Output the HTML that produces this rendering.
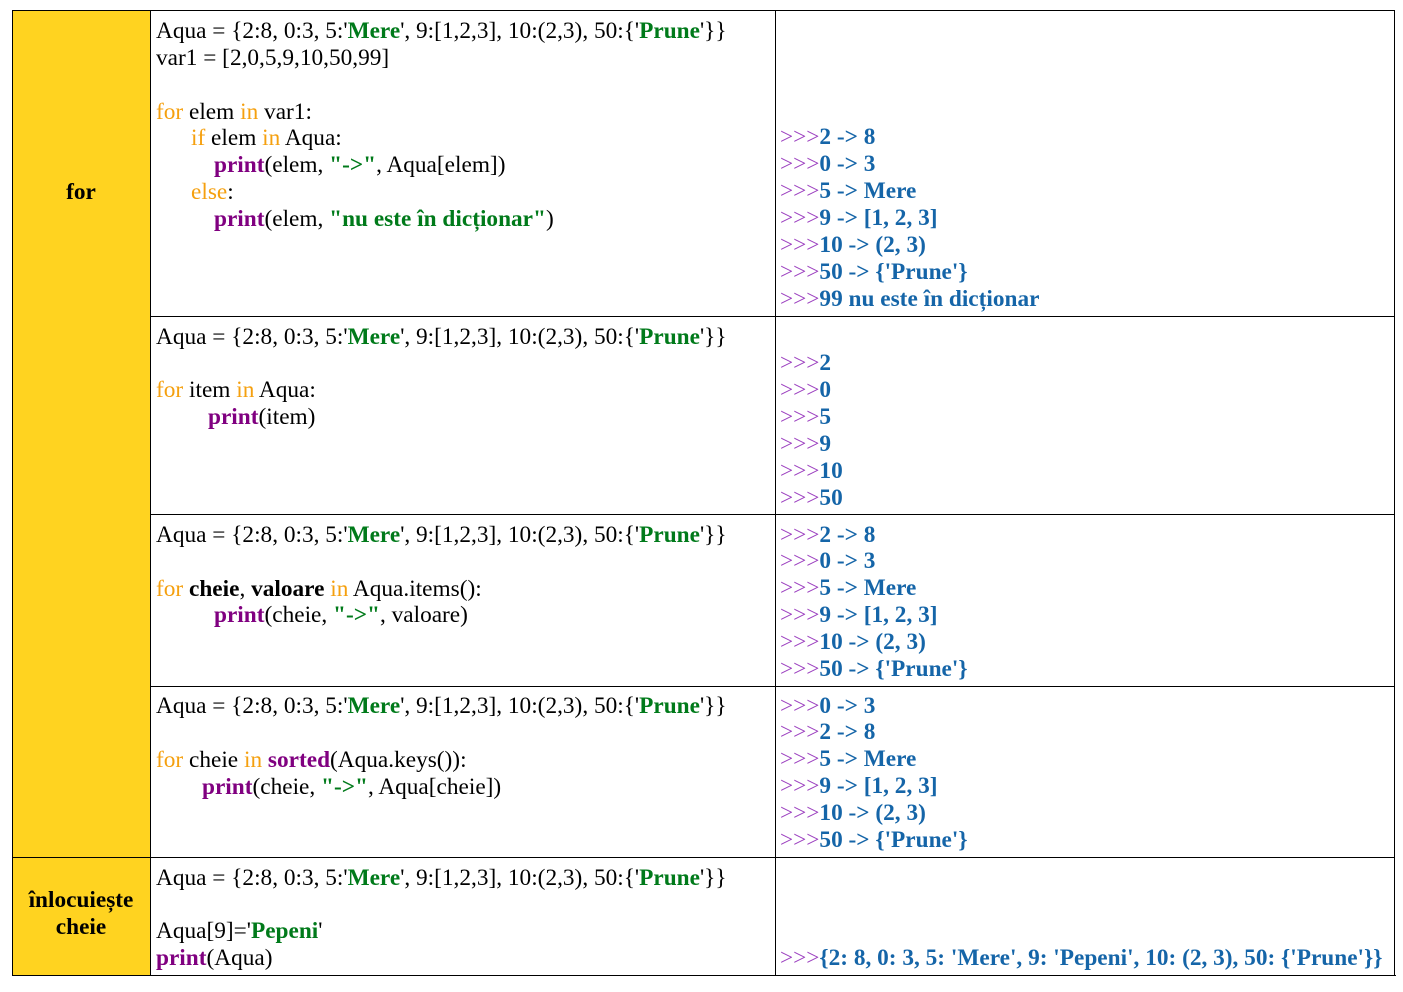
<!DOCTYPE html>
<html><head><meta charset="utf-8"><style>
body{margin:0;background:#fff;width:1403px;height:992px;position:relative;overflow:hidden;font-family:"Liberation Serif",serif;font-size:23.3px;color:#000}
.b{position:absolute;background:#000}
.y{position:absolute;background:#ffd320}
.l{position:absolute;white-space:pre;line-height:28px;margin-top:1px}
.k{color:#f5a00f}
.p{color:#800080;font-weight:bold}
.s{color:#007a1a;font-weight:bold}
.q{color:#9b3fbf}
.o{color:#1565a8;font-weight:bold}
.h{font-weight:bold;text-align:center;width:138px;left:12px}
</style></head><body>
<div class="y" style="left:12px;top:10px;width:138px;height:965px"></div>
<div class="b" style="left:12px;top:10px;width:1383px;height:1px"></div>
<div class="b" style="left:12px;top:975px;width:1384px;height:1px"></div>
<div class="b" style="left:12px;top:10px;width:1px;height:966px"></div>
<div class="b" style="left:150px;top:10px;width:1px;height:966px"></div>
<div class="b" style="left:775px;top:10px;width:1px;height:966px"></div>
<div class="b" style="left:1394px;top:10px;width:1px;height:966px"></div>
<div class="b" style="left:150px;top:316px;width:1245px;height:1px"></div>
<div class="b" style="left:150px;top:514px;width:1245px;height:1px"></div>
<div class="b" style="left:150px;top:686px;width:1245px;height:1px"></div>
<div class="b" style="left:12px;top:857px;width:1383px;height:1px"></div>

<div class="l h" style="top:177px">for</div>
<div class="l h" style="top:885px">înlocuiește</div>
<div class="l h" style="top:912px">cheie</div>

<div class="l" style="left:156px;top:16px">Aqua = {2:8, 0:3, 5:'<span class="s">Mere</span>', 9:[1,2,3], 10:(2,3), 50:{'<span class="s">Prune</span>'}}</div>
<div class="l" style="left:156px;top:43px">var1 = [2,0,5,9,10,50,99]</div>
<div class="l" style="left:156px;top:97px"><span class="k">for</span> elem <span class="k">in</span> var1:</div>
<div class="l" style="left:191px;top:123px"><span class="k">if</span> elem <span class="k">in</span> Aqua:</div>
<div class="l" style="left:214px;top:150px"><span class="p">print</span>(elem, <span class="s">"-&gt;"</span>, Aqua[elem])</div>
<div class="l" style="left:191px;top:177px"><span class="k">else</span>:</div>
<div class="l" style="left:214px;top:204px"><span class="p">print</span>(elem, <span class="s">"nu este în dicționar"</span>)</div>

<div class="l" style="left:780px;top:122px"><span class="q">&gt;&gt;&gt;</span><span class="o">2 -&gt; 8</span></div>
<div class="l" style="left:780px;top:149px"><span class="q">&gt;&gt;&gt;</span><span class="o">0 -&gt; 3</span></div>
<div class="l" style="left:780px;top:176px"><span class="q">&gt;&gt;&gt;</span><span class="o">5 -&gt; Mere</span></div>
<div class="l" style="left:780px;top:203px"><span class="q">&gt;&gt;&gt;</span><span class="o">9 -&gt; [1, 2, 3]</span></div>
<div class="l" style="left:780px;top:230px"><span class="q">&gt;&gt;&gt;</span><span class="o">10 -&gt; (2, 3)</span></div>
<div class="l" style="left:780px;top:257px"><span class="q">&gt;&gt;&gt;</span><span class="o">50 -&gt; {'Prune'}</span></div>
<div class="l" style="left:780px;top:284px"><span class="q">&gt;&gt;&gt;</span><span class="o">99 nu este în dicționar</span></div>

<div class="l" style="left:156px;top:322px">Aqua = {2:8, 0:3, 5:'<span class="s">Mere</span>', 9:[1,2,3], 10:(2,3), 50:{'<span class="s">Prune</span>'}}</div>
<div class="l" style="left:156px;top:375px"><span class="k">for</span> item <span class="k">in</span> Aqua:</div>
<div class="l" style="left:208px;top:402px"><span class="p">print</span>(item)</div>
<div class="l" style="left:780px;top:348px"><span class="q">&gt;&gt;&gt;</span><span class="o">2</span></div>
<div class="l" style="left:780px;top:375px"><span class="q">&gt;&gt;&gt;</span><span class="o">0</span></div>
<div class="l" style="left:780px;top:402px"><span class="q">&gt;&gt;&gt;</span><span class="o">5</span></div>
<div class="l" style="left:780px;top:429px"><span class="q">&gt;&gt;&gt;</span><span class="o">9</span></div>
<div class="l" style="left:780px;top:456px"><span class="q">&gt;&gt;&gt;</span><span class="o">10</span></div>
<div class="l" style="left:780px;top:483px"><span class="q">&gt;&gt;&gt;</span><span class="o">50</span></div>

<div class="l" style="left:156px;top:520px">Aqua = {2:8, 0:3, 5:'<span class="s">Mere</span>', 9:[1,2,3], 10:(2,3), 50:{'<span class="s">Prune</span>'}}</div>
<div class="l" style="left:156px;top:574px"><span class="k">for</span> <b>cheie</b>, <b>valoare</b> <span class="k">in</span> Aqua.items():</div>
<div class="l" style="left:214px;top:600px"><span class="p">print</span>(cheie, <span class="s">"-&gt;"</span>, valoare)</div>
<div class="l" style="left:780px;top:520px"><span class="q">&gt;&gt;&gt;</span><span class="o">2 -&gt; 8</span></div>
<div class="l" style="left:780px;top:546px"><span class="q">&gt;&gt;&gt;</span><span class="o">0 -&gt; 3</span></div>
<div class="l" style="left:780px;top:573px"><span class="q">&gt;&gt;&gt;</span><span class="o">5 -&gt; Mere</span></div>
<div class="l" style="left:780px;top:600px"><span class="q">&gt;&gt;&gt;</span><span class="o">9 -&gt; [1, 2, 3]</span></div>
<div class="l" style="left:780px;top:627px"><span class="q">&gt;&gt;&gt;</span><span class="o">10 -&gt; (2, 3)</span></div>
<div class="l" style="left:780px;top:654px"><span class="q">&gt;&gt;&gt;</span><span class="o">50 -&gt; {'Prune'}</span></div>

<div class="l" style="left:156px;top:691px">Aqua = {2:8, 0:3, 5:'<span class="s">Mere</span>', 9:[1,2,3], 10:(2,3), 50:{'<span class="s">Prune</span>'}}</div>
<div class="l" style="left:156px;top:745px"><span class="k">for</span> cheie <span class="k">in</span> <span class="p">sorted</span>(Aqua.keys()):</div>
<div class="l" style="left:202px;top:772px"><span class="p">print</span>(cheie, <span class="s">"-&gt;"</span>, Aqua[cheie])</div>
<div class="l" style="left:780px;top:691px"><span class="q">&gt;&gt;&gt;</span><span class="o">0 -&gt; 3</span></div>
<div class="l" style="left:780px;top:717px"><span class="q">&gt;&gt;&gt;</span><span class="o">2 -&gt; 8</span></div>
<div class="l" style="left:780px;top:744px"><span class="q">&gt;&gt;&gt;</span><span class="o">5 -&gt; Mere</span></div>
<div class="l" style="left:780px;top:771px"><span class="q">&gt;&gt;&gt;</span><span class="o">9 -&gt; [1, 2, 3]</span></div>
<div class="l" style="left:780px;top:798px"><span class="q">&gt;&gt;&gt;</span><span class="o">10 -&gt; (2, 3)</span></div>
<div class="l" style="left:780px;top:825px"><span class="q">&gt;&gt;&gt;</span><span class="o">50 -&gt; {'Prune'}</span></div>

<div class="l" style="left:156px;top:863px">Aqua = {2:8, 0:3, 5:'<span class="s">Mere</span>', 9:[1,2,3], 10:(2,3), 50:{'<span class="s">Prune</span>'}}</div>
<div class="l" style="left:156px;top:916px">Aqua[9]='<span class="s">Pepeni</span>'</div>
<div class="l" style="left:156px;top:943px"><span class="p">print</span>(Aqua)</div>
<div class="l" style="left:780px;top:943px"><span class="q">&gt;&gt;&gt;</span><span class="o">{2: 8, 0: 3, 5: 'Mere', 9: 'Pepeni', 10: (2, 3), 50: {'Prune'}}</span></div>
</body></html>
